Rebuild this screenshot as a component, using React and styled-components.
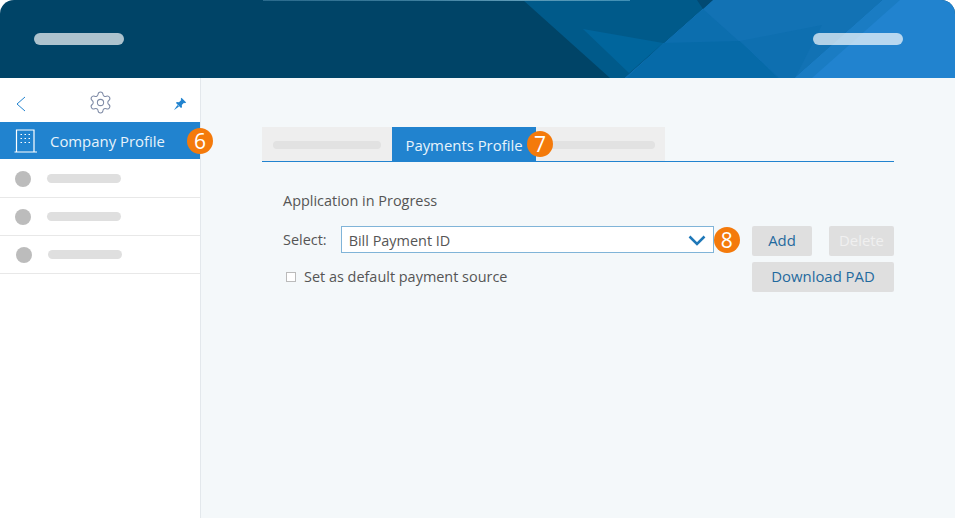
import React from "react";
import styled, { createGlobalStyle } from "styled-components";
import { Settings } from "lucide-react";

const GlobalStyle = createGlobalStyle`
  html, body {
    margin: 0;
    padding: 0;
    background: #ffffff;
  }
  body {
    font-family: "Open Sans", "Noto Sans", sans-serif;
    color: #555;
  }
`;

const Page = styled.div`
  width: 955px;
  height: 518px;
  display: flex;
  flex-direction: column;
  overflow: hidden;
`;

const Banner = styled.header`
  height: 78px;
  flex: none;
  position: relative;
  display: flex;
  align-items: center;
  justify-content: space-between;
  padding: 0 52px 0 34px;
  border-radius: 14px 14px 0 0;
  overflow: hidden;
  background: #004467;
`;

const BannerArt = styled.svg`
  position: absolute;
  inset: 0;
`;

const BannerPill = styled.span`
  position: relative;
  width: 90px;
  height: 12px;
  border-radius: 6px;
  background: #fff;
  opacity: 0.68;
`;

const Body = styled.div`
  flex: 1;
  display: flex;
  min-height: 0;
`;

const Sidebar = styled.aside`
  width: 200px;
  flex: none;
  background: #fff;
  border-right: 1px solid #e3e8ec;
`;

const SideTools = styled.div`
  height: 44px;
  display: flex;
  align-items: center;
  justify-content: space-between;
  padding: 7px 13px 0 15px;
  box-sizing: border-box;
`;

const GearIcon = styled(Settings)`
  margin-top: -2px;
`;

const ActiveItem = styled.div`
  position: relative;
  height: 37px;
  display: flex;
  align-items: center;
  gap: 12px;
  padding-left: 14px;
  background: #2183cf;
  color: #e8f3fb;
  font-size: 14.9px;
`;

const Badge = styled.span`
  position: absolute;
  z-index: 1;
  top: ${(p) => p.$top}px;
  left: ${(p) => p.$left}px;
  width: 26px;
  height: 26px;
  border-radius: 50%;
  background: #f47a0b;
  color: #fff;
  font-size: 21px;
  line-height: 26px;
  text-align: center;
  font-weight: 400;
`;

const SideList = styled.div`
  margin-top: 1px;
`;

const SideRow = styled.div`
  height: 38px;
  box-sizing: border-box;
  display: flex;
  align-items: center;
  gap: 16px;
  padding-left: ${(p) => p.$indent}px;
  border-bottom: 1px solid #e8e8e8;
`;

const Dot = styled.span`
  width: 16px;
  height: 16px;
  border-radius: 50%;
  background: #bcbcbc;
`;

const RowBar = styled.span`
  width: 74px;
  height: 9px;
  border-radius: 5px;
  background: #dfdfdf;
`;

const Main = styled.main`
  flex: 1;
  background: #f4f8fa;
  padding: 49px 61px 0;
`;

const Tabs = styled.div`
  display: flex;
  height: 34px;
  border-bottom: 1px solid #2183cf;
`;

const Tab = styled.div`
  position: relative;
  width: ${(p) => p.$width}px;
  box-sizing: border-box;
  padding-top: 2px;
  display: flex;
  align-items: center;
  justify-content: center;
  background: ${(p) => (p.$active ? "#2183cf" : "#eeeeee")};
  color: #e8f3fb;
  font-size: 14.9px;
`;

const TabBar = styled.span`
  width: 108px;
  height: 8px;
  border-radius: 4px;
  background: #e2e2e2;
`;

const Form = styled.section`
  padding: 29px 0 0 21px;
  font-size: 14.45px;
  color: #555;
`;

const Heading = styled.div`
  line-height: 20px;
  margin-bottom: 15px;
`;

const FormGrid = styled.div`
  display: grid;
  grid-template-columns: 431px 1fr;
  row-gap: 6px;
`;

const SelectRow = styled.div`
  display: flex;
  align-items: flex-start;
  gap: 14px;
  height: 30px;
  line-height: 28px;
`;

const FakeSelect = styled.div`
  position: relative;
  flex: 1;
  height: 27px;
  box-sizing: border-box;
  display: flex;
  align-items: center;
  justify-content: space-between;
  padding: 2px 7px 0;
  background: #fff;
  border: 1px solid #80b4d8;
  color: #555;
`;

const Buttons = styled.div`
  display: flex;
  justify-content: flex-end;
  gap: 17px;
`;

const Button = styled.div`
  width: ${(p) => p.$width}px;
  height: 30px;
  box-sizing: border-box;
  padding-bottom: 2px;
  border-radius: 2px;
  background: #dfdfdf;
  color: ${(p) => (p.$disabled ? "#f0f0f0" : "#1f6a9e")};
  font-size: 14.9px;
  display: flex;
  align-items: center;
  justify-content: center;
`;

const CheckRow = styled.label`
  display: flex;
  align-items: center;
  gap: 8px;
  padding: 0 0 2px 3px;
  height: 30px;
  box-sizing: border-box;
`;

const Check = styled.span`
  width: 8px;
  height: 8px;
  margin-top: 1px;
  background: #fff;
  border: 1px solid #bbb;
`;

const BuildingIcon = () => (
  <svg width="24" height="24" viewBox="0 0 24 24" fill="none" stroke="#fff" strokeWidth="1.2">
    <path d="M0.500 23h22.500M2.500 23V1h17.500v22" />
    <path d="M6.500 5.500h1.500M10.500 5.500h1.500M14.500 5.500h1.500M6.500 9.500h1.500M10.500 9.500h1.500M14.500 9.500h1.500M6.500 13.500h1.500M10.500 13.500h1.500M14.500 13.500h1.500" />
  </svg>
);

const BackIcon = () => (
  <svg width="12" height="16" viewBox="0 0 12 16" fill="none" stroke="#2183cf" strokeWidth="1">
    <path d="M10 1 2 8l8 7" />
  </svg>
);

const PinIcon = () => (
  <svg width="14" height="14" viewBox="0 0 14 14" fill="#2183cf">
    <path d="M8.500.8 13.200 5.500 11.900 6.300 11 5.800 8.800 8 9 10.300 8 11 3 6 3.700 5 6 5.200 8.200 3 7.700 2.100Z" />
    <path d="M4.500 8 .8 13.200 6 9.500Z" />
  </svg>
);

const ChevronIcon = () => (
  <svg width="18" height="11" viewBox="0 0 18 11" fill="none" stroke="#1f78b8" strokeWidth="2.500">
    <path d="M1.500 1.500 9 9l7.500-7.500" />
  </svg>
);

const App = () => (
  <Page>
    <GlobalStyle />
    <Banner>
      <BannerArt width="955" height="78" viewBox="0 0 955 78">
        <defs>
          <linearGradient id="edge" x1="0" x2="1" y1="0" y2="0">
            <stop offset="0" stopColor="#2a6a8c" />
            <stop offset="0.4" stopColor="#3a7c9c" />
            <stop offset="0.7" stopColor="#5f9cb8" />
            <stop offset="1" stopColor="#3f8fb5" />
          </linearGradient>
        </defs>
        <polygon points="523,0 713,0 625,78 610,78" fill="#005a8a" />
        <polygon points="583,29 663,43 629,73" fill="#00659c" />
        <polygon points="713,0 955,0 955,78 625,78" fill="#2183cf" />
        <polygon points="713,0 883,0 795,78 625,78" fill="#1272b4" />
        <polygon points="625,78 703,9 780,78" fill="#0c6eae" />
        <polygon points="663,43 740,41 778,78 627,78" fill="#066aa8" />
        <polygon points="740,41 822,25 795,78 780,78" fill="#0e6fb0" />
        <polygon points="883,0 900,0 812,78 795,78" fill="#1a7cc3" />
        <polygon points="697,0 713,0 703,9" fill="#024a73" />
        <rect x="263" y="0" width="367" height="1" fill="url(#edge)" />
      </BannerArt>
      <BannerPill />
      <BannerPill />
    </Banner>
    <Body>
      <Sidebar>
        <SideTools>
          <BackIcon />
          <GearIcon size={25} color="#7f8ba6" strokeWidth={1} />
          <PinIcon />
        </SideTools>
        <ActiveItem>
          <BuildingIcon />
          Company Profile
          <Badge $top={6} $left={187}>6</Badge>
        </ActiveItem>
        <SideList>
          <SideRow $indent={15}><Dot /><RowBar /></SideRow>
          <SideRow $indent={15}><Dot /><RowBar /></SideRow>
          <SideRow $indent={16}><Dot /><RowBar /></SideRow>
        </SideList>
      </Sidebar>
      <Main>
        <Tabs>
          <Tab $width={130}><TabBar /></Tab>
          <Tab $width={144} $active>
            Payments Profile
            <Badge $top={4} $left={135}>7</Badge>
          </Tab>
          <Tab $width={129}><TabBar /></Tab>
        </Tabs>
        <Form>
          <Heading>Application in Progress</Heading>
          <FormGrid>
            <SelectRow>
              Select:
              <FakeSelect>
                Bill Payment ID
                <ChevronIcon />
                <Badge $top={0} $left={372}>8</Badge>
              </FakeSelect>
            </SelectRow>
            <Buttons>
              <Button $width={60}>Add</Button>
              <Button $width={65} $disabled>Delete</Button>
            </Buttons>
            <CheckRow><Check />Set as default payment source</CheckRow>
            <Buttons>
              <Button $width={142}>Download PAD</Button>
            </Buttons>
          </FormGrid>
        </Form>
      </Main>
    </Body>
  </Page>
);

export default App;
